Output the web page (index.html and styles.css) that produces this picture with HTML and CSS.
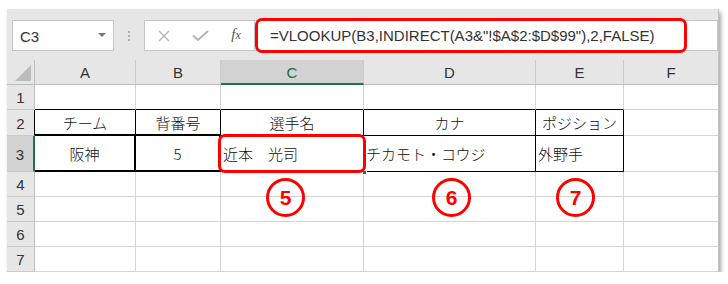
FILE: index.html
```html
<!DOCTYPE html>
<html lang="ja">
<head>
<meta charset="utf-8">
<link rel="stylesheet" href="styles.css">
</head>
<body>
<div class="frame">
  <div class="toolbar">
    <div class="namebox"><span>C3</span><span class="caret"></span></div>
    <div class="dots"><i></i><i></i><i></i></div>
    <div class="fxbox">
      <span class="slot"><svg width="12" height="12" viewBox="0 0 12 12"><path d="M1 1L11 11M11 1L1 11" stroke="#b4b4b4" stroke-width="1.4" fill="none"/></svg></span>
      <span class="slot"><svg width="17" height="11" viewBox="0 0 17 11"><path d="M1 5.5L6 10L16 1" stroke="#b4b4b4" stroke-width="2" fill="none"/></svg></span>
      <span class="slot fx">f<span class="fxx">x</span></span>
    </div>
    <div class="formula">=VLOOKUP(B3,INDIRECT(A3&amp;"!$A$2:$D$99"),2,FALSE)</div>
  </div>
  <div class="grid">
    <div class="corner"><span class="tri"></span></div>
    <div class="ch">A</div><div class="ch">B</div><div class="ch sel">C</div><div class="ch">D</div><div class="ch">E</div><div class="ch last">F</div>

    <div class="rh">1</div>
    <div class="c tb"></div><div class="c tb"></div><div class="c tb"></div><div class="c tb"></div><div class="c tb"></div><div class="c last"></div>

    <div class="rh tr">2</div>
    <div class="c t thickb center">チーム</div><div class="c t thickb center">背番号</div><div class="c t center">選手名</div><div class="c t center">カナ</div><div class="c t center">ポジション</div><div class="c last"></div>

    <div class="rh sel">3</div>
    <div class="c thick center">阪神</div><div class="c thick center">5</div><div class="c t thickb">近本　光司</div><div class="c t">チカモト・コウジ</div><div class="c t">外野手</div><div class="c last"></div>

    <div class="rh">4</div>
    <div class="c"></div><div class="c"></div><div class="c"></div><div class="c"></div><div class="c"></div><div class="c last"></div>
    <div class="rh">5</div>
    <div class="c"></div><div class="c"></div><div class="c"></div><div class="c"></div><div class="c"></div><div class="c last"></div>
    <div class="rh">6</div>
    <div class="c"></div><div class="c"></div><div class="c"></div><div class="c"></div><div class="c"></div><div class="c last"></div>
    <div class="rh">7</div>
    <div class="c"></div><div class="c"></div><div class="c"></div><div class="c"></div><div class="c"></div><div class="c last"></div>
  </div>

  <div class="handle"></div>
  <div class="redbox formula-mark"></div>
  <div class="redbox cell-mark"></div>
  <div class="circle c5">5</div>
  <div class="circle c6">6</div>
  <div class="circle c7">7</div>
</div>
</body>
</html>
```

FILE: styles.css
```css
* { box-sizing: border-box; }
html, body { margin: 0; padding: 0; background: #fff; }
body { font-family: "Liberation Sans", Arial, sans-serif; }

.frame {
  position: relative;
  margin: 9px 0 0 7px;
  width: 712px;
  height: 263px;
  background: #e6e6e6;
  border-right: 1px solid #c4c4c4;
  box-shadow: 2px 3px 4px rgba(0, 0, 0, 0.35);
}

.toolbar {
  display: flex;
  align-items: stretch;
  height: 51px;
  padding: 11px 0 9px 5px;
}

.namebox {
  width: 102px;
  background: #fff;
  border: 1px solid #c6c6c6;
  display: flex;
  align-items: center;
  justify-content: space-between;
  padding: 2px 7px 0 7px;
  font-size: 15px;
  color: #333;
}
.caret {
  width: 0; height: 0;
  border-left: 4px solid transparent;
  border-right: 4px solid transparent;
  border-top: 4px solid #777;
  margin-top: -4px;
}

.dots {
  width: 30px;
  display: flex;
  flex-direction: column;
  align-items: center;
  justify-content: center;
  gap: 2px;
}
.dots i {
  display: block;
  width: 2px; height: 2px;
  background: #b0b0b0;
}

.fxbox {
  width: 111px;
  background: #fff;
  border: 1px solid #c6c6c6;
  display: flex;
  align-items: center;
  padding-left: 1px;
}
.slot {
  width: 36px;
  display: flex;
  justify-content: center;
  align-items: center;
}
.fx {
  font-family: "Liberation Serif", serif;
  font-style: italic;
  font-size: 15px;
  color: #555;
  padding-bottom: 2px;
}
.fxx { font-size: 12px; position: relative; top: 1px; }

.formula {
  flex: 1;
  background: #fff;
  border: 1px solid #c6c6c6;
  border-left: none;
  display: flex;
  align-items: center;
  padding: 0 0 1px 15px;
  font-size: 15px;
  color: #333;
  white-space: nowrap;
}

.grid {
  display: grid;
  grid-template-columns: 28px 101px 85px 143px 172px 88px 94px;
  grid-template-rows: 25px 25px 26px 36px 25px 25px 25px 25px;
  background: #fff;
}

.corner {
  position: relative;
  background: #e6e6e6;
  border-right: 1px solid #bdbdbd;
  border-bottom: 1px solid #bdbdbd;
}
.tri {
  position: absolute;
  right: 3px;
  bottom: 3px;
  width: 0; height: 0;
  border-left: 16px solid transparent;
  border-bottom: 16px solid #bcbcbc;
}

.ch {
  background: #e6e6e6;
  border-right: 1px solid #cacaca;
  border-bottom: 1px solid #bdbdbd;
  display: flex;
  align-items: center;
  justify-content: center;
  font-size: 15px;
  color: #333;
  padding-top: 1px;
}
.ch.sel {
  background: #d2d2d2;
  border-bottom: 2px solid #217346;
  color: #1d6a40;
}
.ch.last { border-right: none; }

.rh {
  background: #e6e6e6;
  border-right: 1px solid #bdbdbd;
  border-bottom: 1px solid #cacaca;
  display: flex;
  align-items: center;
  justify-content: center;
  font-size: 15px;
  color: #333;
  padding-top: 1px;
}
.rh.tr { border-right-color: #000; }
.rh.sel {
  background: #d2d2d2;
  border-right: 2px solid #217346;
}

.c {
  border-right: 1px solid #d4d4d4;
  border-bottom: 1px solid #d4d4d4;
  display: flex;
  align-items: center;
  padding-left: 2px;
  font-family: "Noto Sans CJK JP", "Liberation Sans", sans-serif;
  font-weight: 300;
  font-size: 15px;
  color: #111;
  white-space: nowrap;
}
.c.last { border-right: none; }
.c.center { justify-content: center; padding-left: 0; }
.c.tb { border-bottom-color: #000; }
.c.t { border-right-color: #000; border-bottom-color: #000; }
.c.thickb { border-bottom: 2px solid #000; }
.c.thick { border-right: 2px solid #000; border-bottom: 2px solid #000; }

.handle {
  position: absolute;
  left: 355px;
  top: 161px;
  width: 5px;
  height: 5px;
  background: #217346;
  border: 1px solid #fff;
}

.redbox {
  position: absolute;
  border: 3px solid #f00;
  border-radius: 7px;
}
.formula-mark { left: 248px; top: 9px; width: 432px; height: 35px; }
.cell-mark { left: 211px; top: 125px; width: 148px; height: 39px; }

.circle {
  position: absolute;
  top: 169px;
  width: 39px;
  height: 39px;
  border: 3px solid #f00;
  border-radius: 50%;
  display: flex;
  align-items: center;
  justify-content: center;
  font-family: "Liberation Sans", Arial, sans-serif;
  font-weight: bold;
  font-size: 21px;
  color: #f00;
}
.c5 { left: 259px; }
.c6 { left: 425px; }
.c7 { left: 549px; }
```
